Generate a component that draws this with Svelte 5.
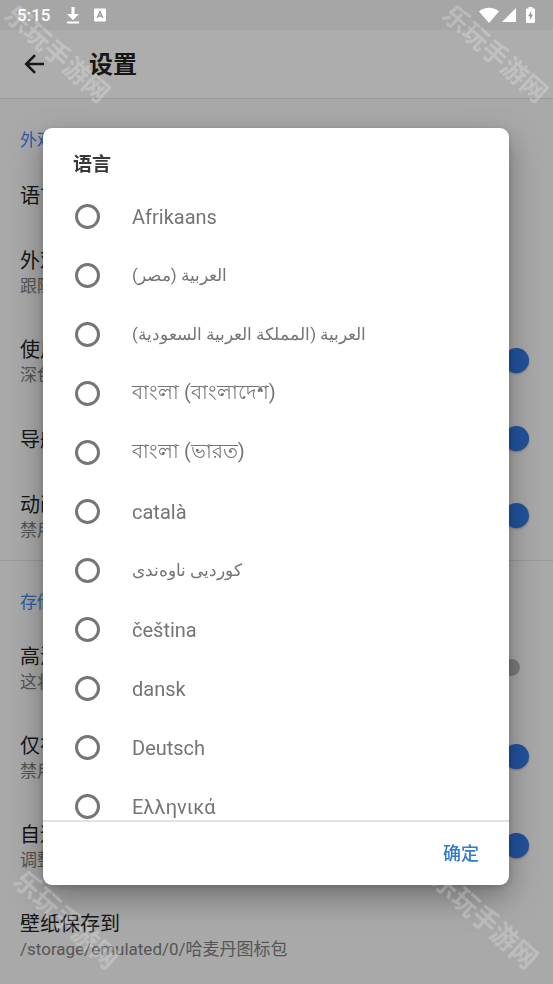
<script>
  const sections = [
    {
      title: '外观',
      rows: [
        { id: 'lang', title: '语言' },
        { id: 'theme', title: '外观', note: '跟随系统' },
        { id: 'black', title: '使用', note: '深色', on: true },
        { id: 'nav', title: '导航', on: true },
        { id: 'anim', title: '动画', note: '禁用', on: true }
      ]
    },
    {
      title: '存储',
      rows: [
        { id: 'hires', title: '高清', note: '这将', on: false },
        { id: 'wifi', title: '仅在', note: '禁用', on: true },
        { id: 'crop', title: '自适', note: '调整', on: true },
        { id: 'path', title: '壁纸保存到', note: '/storage/emulated/0/哈麦丹图标包' }
      ]
    }
  ];

  const languages = [
    { name: 'Afrikaans' },
    { name: 'العربية (مصر)', arabic: true },
    { name: 'العربية (المملكة العربية السعودية)', arabic: true },
    { name: 'বাংলা (বাংলাদেশ)' },
    { name: 'বাংলা (ভারত)' },
    { name: 'català' },
    { name: 'کوردیی ناوەندی', arabic: true },
    { name: 'čeština' },
    { name: 'dansk' },
    { name: 'Deutsch' },
    { name: 'Ελληνικά' }
  ];

  const marks = ['top left', 'top right', 'bottom left', 'bottom right'];
  let selected = $state('');
</script>

<div class="screen">
  <div class="status">
    <span class="clock">5:15</span>
    <svg class="download" width="14" height="18" viewBox="0 0 14 18" fill="#fff">
      <path d="M5.500 1h3v7H13l-6 6-6-6h4.500zM1 15.500h12V17.500H1z" />
    </svg>
    <svg width="12" height="14" viewBox="0 0 12 14">
      <rect width="12" height="13" y="0.500" rx="1" fill="#fff" />
      <path d="M3.300 10 6 3.500 8.700 10M4.300 8h3.400" fill="none" stroke="#999" stroke-width="1.300" />
    </svg>
    <span class="grow"></span>
    <svg class="wifi" width="20" height="16" viewBox="0 0 20 16" fill="#fff">
      <path d="M0 4.500C5.500-.5 14.500-.5 20 4.500L10 16z" />
    </svg>
    <svg class="signal" width="14" height="14" viewBox="0 0 14 14" fill="#fff"><path d="M14 0v14H0z" /></svg>
    <svg width="9" height="16" viewBox="0 0 9 16">
      <path d="M2.500 0h4v1.500H8q1 0 1 1V15q0 1-1 1H1q-1 0-1-1V2.500q0-1 1-1h1.500z" fill="#fff" />
      <path d="M5.300 4 2 9.300h2V13l3-5.300H5.300z" fill="#999" />
    </svg>
  </div>

  <header>
    <button class="back" aria-label="返回">
      <svg width="20" height="20" viewBox="0 0 20 20" fill="none" stroke="#161616" stroke-width="2.500">
        <path d="M20 10H2.500M11 1.200 2.200 10l8.800 8.800" />
      </svg>
    </button>
    <h1>设置</h1>
  </header>

  <main>
    {#each sections as section}
      <section>
        <h2>{section.title}</h2>
        {#each section.rows as row}
          <div class="row" class:single={!row.note}>
            <label class="text" for={row.on === undefined ? undefined : row.id}>
              <span class="name">{row.title}</span>
              {#if row.note}<span class="note">{row.note}</span>{/if}
            </label>
            {#if row.on !== undefined}
              <input class="switch" id={row.id} type="checkbox" checked={row.on} />
            {/if}
          </div>
        {/each}
      </section>
    {/each}
  </main>
</div>

<div class="overlay">
  <div class="dialog" role="dialog" aria-labelledby="dialog-title">
    <h2 id="dialog-title">语言</h2>
    <div class="list">
      {#each languages as language}
        <label class="option">
          <input type="radio" name="language" value={language.name} bind:group={selected} />
          <span dir="auto" class:arabic={language.arabic}>{language.name}</span>
        </label>
      {/each}
    </div>
    <div class="actions"><button>确定</button></div>
  </div>
</div>

{#each marks as mark}
  <div class="mark {mark}" aria-hidden="true">乐玩手游网</div>
{/each}

<style>
  :global(body) {
    background: #a9a9a9;
  }
  .screen,
  .overlay,
  .mark {
    font-family: Roboto, 'Noto Sans', 'Noto Sans CJK SC', sans-serif;
    box-sizing: border-box;
  }
  .screen {
    height: 100vh;
    overflow: hidden;
    background: #a9a9a9;
    color: #161616;
  }
  h1,
  h2 {
    margin: 0;
  }
  button {
    padding: 0;
    border: 0;
    background: none;
    font-family: inherit;
  }
  .status {
    display: flex;
    align-items: center;
    height: 30px;
    padding: 0 18px 0 17px;
    background: #a6a6a6;
    color: #fff;
  }
  .clock {
    font-size: 17px;
    font-weight: 500;
  }
  .download {
    margin: 0 14px 0 16px;
  }
  .grow {
    flex: 1;
  }
  .wifi {
    margin-right: 3px;
  }
  .signal {
    margin-right: 10px;
  }
  header {
    display: flex;
    align-items: center;
    height: 68px;
    padding: 0 24px;
    background: #adadad;
  }
  .back {
    display: flex;
    width: 65px;
  }
  h1 {
    padding-top: 2px;
    font-size: 24px;
    font-weight: 700;
    line-height: 36px;
  }
  section {
    border-top: 1px solid #999;
  }
  section h2 {
    box-sizing: border-box;
    height: 62px;
    padding: 29px 20px 9px;
    color: #2a5ba8;
    font-size: 17px;
    font-weight: 400;
    line-height: 24px;
  }
  .row {
    display: flex;
    align-items: center;
    justify-content: space-between;
    height: 89px;
    padding: 0 24px 0 20px;
  }
  .row.single {
    height: 66px;
  }
  .text {
    display: flex;
    flex-direction: column;
    padding-top: 3px;
  }
  .name {
    font-size: 20px;
    line-height: 26px;
  }
  .note {
    color: #555;
    font-size: 17px;
    line-height: 24px;
  }
  .switch {
    appearance: none;
    width: 17px;
    height: 17px;
    margin: 0 9px 0 0;
    border-radius: 50%;
    background: #7c7c7c;
  }
  .switch:checked {
    width: 25px;
    height: 25px;
    margin: 0;
    background: #22539f;
    box-shadow: 0 1px 2px rgba(0, 0, 0, 0.3);
  }
  .overlay {
    position: fixed;
    inset: 0;
    display: flex;
    padding: 128px 44px 99px 43px;
  }
  .dialog {
    display: flex;
    flex: 1;
    flex-direction: column;
    min-width: 0;
    border-radius: 9px;
    background: #fff;
    box-shadow: 0 12px 32px rgba(0, 0, 0, 0.35), 0 2px 6px rgba(0, 0, 0, 0.15);
  }
  .dialog h2 {
    padding: 23px 30px 8px;
    color: #383838;
    font-size: 19px;
    font-weight: 700;
    line-height: 28px;
  }
  .list {
    flex: 1;
    min-height: 0;
    overflow: hidden;
    border-bottom: 2px solid #e2e2e2;
  }
  .option {
    display: flex;
    align-items: center;
    gap: 32px;
    height: 59px;
    padding: 0 32px;
    color: #757575;
    font-size: 20px;
  }
  .arabic {
    padding-bottom: 2px;
    font-size: 17px;
  }
  .option input {
    appearance: none;
    box-sizing: border-box;
    width: 25px;
    height: 25px;
    margin: 0;
    border: 3px solid #757575;
    border-radius: 50%;
  }
  .option input:checked {
    box-shadow: inset 0 0 0 4px #fff, inset 0 0 0 13px #2f7cc9;
  }
  .actions {
    display: flex;
    justify-content: flex-end;
    align-items: center;
    box-sizing: border-box;
    height: 63px;
    padding: 0 30px 4px;
  }
  .actions button {
    color: #2f7cc9;
    font-size: 18px;
    font-weight: 500;
  }
  .mark {
    position: fixed;
    width: 130px;
    color: rgba(255, 255, 255, 0.23);
    font-size: 26px;
    font-weight: 700;
    line-height: 26px;
    text-align: center;
    white-space: nowrap;
    transform: rotate(42deg);
    pointer-events: none;
  }
  .top {
    top: 41px;
  }
  .bottom {
    bottom: 51px;
  }
  .left {
    left: -8px;
  }
  .right {
    right: -7px;
  }
  .bottom.left {
    left: 1px;
  }
  .bottom.right {
    right: 3px;
  }
</style>
